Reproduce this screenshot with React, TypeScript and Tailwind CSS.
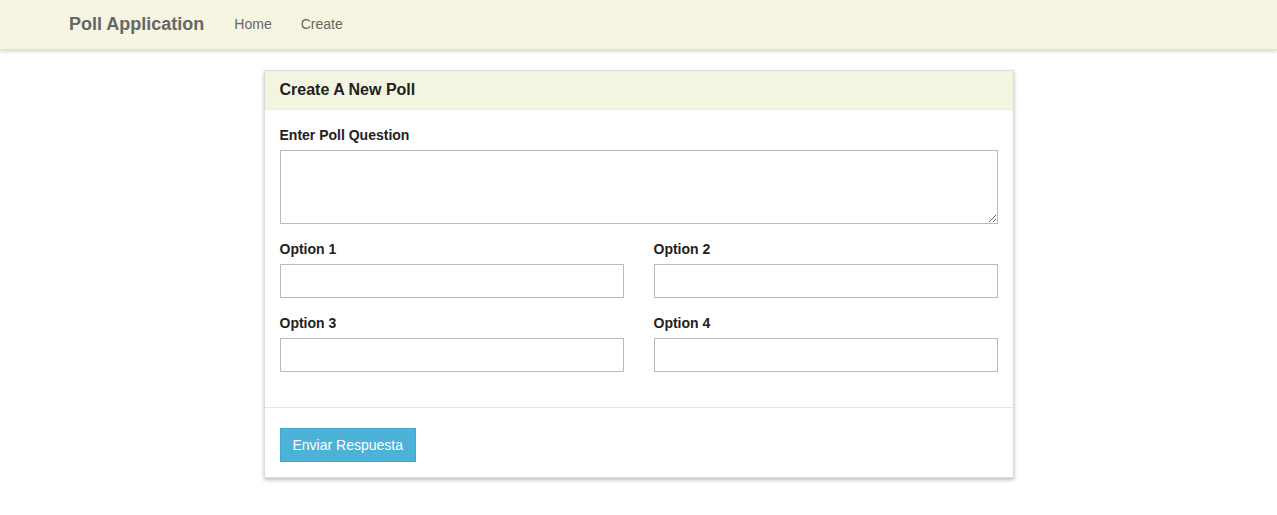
export default function App() {
  const font = { fontFamily: '"Liberation Sans", Arial, sans-serif' };
  return (
    <div className="min-h-[515px] bg-white text-[14px] text-[#333]" style={font}>
      <nav className="h-[50px] bg-[#f5f5e1] shadow-[0_2px_3px_rgba(0,0,0,0.15)] border-b border-[#e3e3d3] flex items-center">
        <div className="flex items-center pl-[69px]">
          <span className="text-[18px] font-bold text-[#666]">Poll Application</span>
          <span className="ml-[30px] text-[#666]">Home</span>
          <span className="ml-[29px] text-[#666]">Create</span>
        </div>
      </nav>
      <div className="flex justify-center pt-[20px]">
        <div className="w-[750px] border border-[#dcdcdc] bg-white shadow-[0_2px_4px_rgba(0,0,0,0.25)]">
          <div className="bg-[#f4f5e0] px-[15px] h-[39px] flex items-center border-b border-[#ececdc]">
            <h3 className="text-[16px] font-bold text-[#222]">Create A New Poll</h3>
          </div>
          <div className="px-[15px] pt-[15px] pb-[20px]">
            <div className="mb-[15px]">
              <label className="block font-bold text-[#222] leading-[20px] mb-[5px]">Enter Poll Question</label>
              <textarea className="block w-full h-[74px] border border-[#bbb] resize-y" />
            </div>
            <div className="grid grid-cols-2 gap-x-[30px]">
              {["Option 1", "Option 2", "Option 3", "Option 4"].map((o) => (
                <div key={o} className="mb-[15px]">
                  <label className="block font-bold text-[#222] leading-[20px] mb-[5px]">{o}</label>
                  <input className="block w-full h-[34px] border border-[#bbb]" />
                </div>
              ))}
            </div>
          </div>
          <div className="border-t border-[#e5e5e5] px-[15px] pt-[20px] pb-[15px]">
            <button className="h-[34px] px-[12px] bg-[#4cb2d8] border border-[#3fa6cc] text-white text-[14px]">
              Enviar Respuesta
            </button>
          </div>
        </div>
      </div>
    </div>
  );
}
